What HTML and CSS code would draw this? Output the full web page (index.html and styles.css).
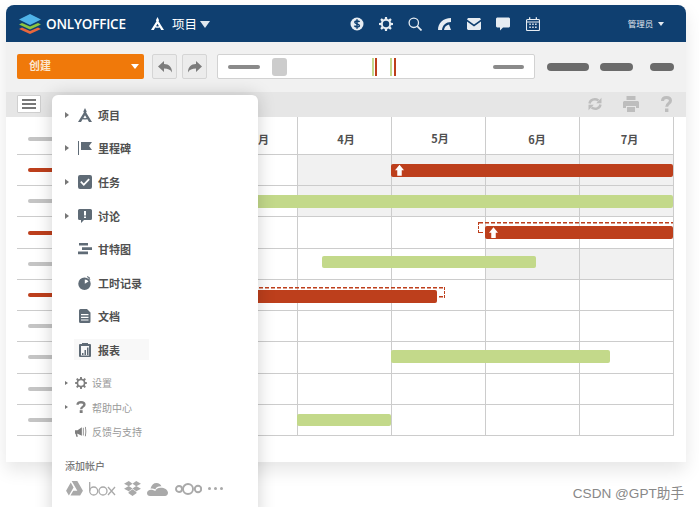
FILE: index.html
```html
<!DOCTYPE html>
<html lang="en">
<head>
    <meta charset="UTF-8">
    <meta name="viewport" content="width=device-width, initial-scale=1.0">
    <title>ONLYOFFICE 项目</title>
    <link rel="stylesheet" href="styles.css">
</head>
<body>
<div class="page">
    <div class="window">
        <header class="topbar">
            <svg class="logo" viewBox="0 0 22 20">
                <path fill="#e8673c" d="M11 20 0 15l3-1.5L11 17l8-3.500 3 1.500z"/>
                <path fill="#8cc63f" d="M11 15.500 0 10.500 3 9l8 3.500L19 9l3 1.500z"/>
                <path fill="#4fb3e8" d="M11 11 0 5.500 11 0l11 5.500z"/>
            </svg>
            <span class="brand">ONLYOFFICE</span>
            <svg class="module-icon" viewBox="0 0 14 14"><path fill="#fff" d="M7 0l1.700 3.400-.6 1.100L14 14h-3L7 7.200 3 14H0l5.900-9.500-.6-1.100zM4.500 11l.6-1.300c1.100.6 2.700.6 3.800 0l.6 1.300c-1.500.8-3.500.8-5 0z"/></svg>
            <span class="module-name">项目</span>
            <span class="caret-big"></span>
            <nav class="top-icons">
                <svg viewBox="0 0 14 14"><circle cx="7" cy="7" r="6.500" fill="#e6ecf2"/><path fill="none" stroke="#0f3f70" stroke-width="1.500" d="M9.500 5C9 3.800 4.800 3.600 4.800 5.300c0 2 4.600 1.200 4.600 3.400 0 1.700-4.300 1.500-5-.1M7 2.300v9.400"/></svg>
                <svg viewBox="0 0 14 14"><path fill="#e6ecf2" d="M6 0h2l.3 2 1.300.5L11.300 1.300l1.400 1.400L11.500 4.400 12 5.700l2 .3v2l-2 .3-.5 1.300 1.200 1.700-1.400 1.400-1.700-1.200-1.300.5L8 14H6l-.3-2-1.300-.5-1.700 1.200-1.400-1.400 1.200-1.700L2 8.300 0 8V6l2-.3.500-1.300L1.300 2.700l1.400-1.400 1.700 1.200L5.700 2z"/><circle cx="7" cy="7" r="3.200" fill="#0f3f70"/></svg>
                <svg viewBox="0 0 14 14"><circle cx="5.800" cy="5.800" r="4.700" fill="none" stroke="#e6ecf2" stroke-width="1.300"/><path stroke="#e6ecf2" stroke-width="1.700" d="M9.200 9.200 13.500 13.500"/></svg>
                <svg viewBox="0 0 14 14"><path fill="#e6ecf2" d="M0 13C0 6 5 1 13 1v4C8 5 4.500 8 4 13zM6 13c.3-3 2.500-5 5-5.500L13 13z"/></svg>
                <svg viewBox="0 0 14 12"><path fill="#e6ecf2" d="M0 1.500 1 0h12l1 1.500L7 6.500zM0 3.500l7 5 7-5V11l-1 1H1l-1-1z"/></svg>
                <svg viewBox="0 0 14 13"><path fill="#e6ecf2" d="M1 0h12l1 1v8l-1 1H7l-3 3v-3H1L0 9V1z"/></svg>
                <svg viewBox="0 0 14 14"><path fill="none" stroke="#e6ecf2" stroke-width="1.100" d="M1.500 2.500h11a1 1 0 0 1 1 1v9a1 1 0 0 1-1 1h-11a1 1 0 0 1-1-1v-9a1 1 0 0 1 1-1zM.5 5h13"/><path fill="#e6ecf2" d="M3 .3h1.300v2.700H3zM9.700.3H11v2.700H9.700zM3.300 6.500h1.500V8H3.300zM6.200 6.500h1.500V8H6.200zM9.100 6.500h1.500V8H9.100zM3.300 9.400h1.500v1.500H3.300zM6.200 9.400h1.500v1.500H6.200zM9.100 9.400h1.500v1.500H9.100z"/></svg>
            </nav>
            <span class="user">管理员</span>
            <span class="caret-small"></span>
        </header>

        <div class="toolbar">
            <button class="create"><span>创建</span><i class="caret-white"></i></button>
            <button class="step">
                <svg viewBox="0 0 14 12"><path fill="#7c7c7c" d="M6 0v3c5 0 8 3 8 8.500C12.500 8.500 10 7.500 6 7.500V11L0 5.500z"/></svg>
            </button>
            <button class="step">
                <svg viewBox="0 0 14 12"><path fill="#7c7c7c" d="M8 0v3c-5 0-8 3-8 8.500C1.500 8.500 4 7.500 8 7.500V11l6-5.500z"/></svg>
            </button>
            <div class="timeline">
                <span class="tl-line"></span>
                <span class="tl-thumb"></span>
                <span class="tl-mark first"><i class="g"></i><i class="r"></i></span>
                <span class="tl-mark second"><i class="g"></i><i class="r"></i></span>
                <span class="tl-line end"></span>
            </div>
            <div class="pills">
                <span class="pill p1"></span>
                <span class="pill p2"></span>
                <span class="pill p3"></span>
            </div>
        </div>

        <div class="subbar">
            <button class="burger"><i></i><i></i><i></i></button>
            <div class="sub-icons">
                <svg class="ic-refresh" viewBox="0 0 14 14"><path fill="none" stroke="#bdbdbd" stroke-width="2.400" d="M1.500 6.500C2 3 6.500.8 10.500 3.500M12.500 7.500c-.5 3.500-5 5.700-9 3"/><path fill="#bdbdbd" d="M13.500.8v5.400H8.200zM.5 13.200V7.800h5.300z"/></svg>
                <svg class="ic-print" viewBox="0 0 16 16"><path fill="#bdbdbd" d="M3.500 0h9v4h-9zM1 5h14l1 1v6h-3v-2H3v2H0V6zM4 11h8v5H4z"/></svg>
                <svg class="ic-help" viewBox="0 0 11 16"><path fill="none" stroke="#bdbdbd" stroke-width="3" d="M1.500 5C1.500 2.500 3.300 1.500 5.500 1.500s4 1.200 4 3.200c0 2.600-3.800 2.700-3.800 6"/><path fill="#bdbdbd" d="M4 12.500h3.400V16H4z"/></svg>
            </div>
        </div>

        <section class="gantt">
            <div class="g-row g-head">
                <div class="task"><i class="stub grey"></i></div>
                <div class="cell month m4">4月</div>
                <div class="cell month m5">5月</div>
                <div class="cell month m6">6月</div>
                <div class="cell month m7">7月</div>
                <span class="old-month">月</span>
            </div>
            <div class="g-row">
                <div class="task"><i class="stub red"></i></div>
                <div class="cell shade"></div><div class="cell shade"></div><div class="cell shade"></div><div class="cell shade"></div>
                <div class="bar red b1"><i class="up"></i></div>
            </div>
            <div class="g-row">
                <div class="task"><i class="stub grey"></i></div>
                <div class="cell shade"></div><div class="cell shade"></div><div class="cell shade"></div><div class="cell shade"></div>
                <div class="bar green b2"></div>
            </div>
            <div class="g-row">
                <div class="task"><i class="stub red"></i></div>
                <div class="cell"></div><div class="cell"></div><div class="cell"></div><div class="cell"></div>
                <div class="plan p-a"></div>
                <div class="bar red b3"><i class="up"></i></div>
            </div>
            <div class="g-row">
                <div class="task"><i class="stub grey"></i></div>
                <div class="cell"></div><div class="cell"></div><div class="cell shade"></div><div class="cell shade"></div>
                <div class="bar green b4"></div>
            </div>
            <div class="g-row">
                <div class="task"><i class="stub red"></i></div>
                <div class="cell"></div><div class="cell"></div><div class="cell"></div><div class="cell"></div>
                <div class="plan p-b"></div>
                <div class="bar red b5"></div>
            </div>
            <div class="g-row">
                <div class="task"><i class="stub grey"></i></div>
                <div class="cell"></div><div class="cell"></div><div class="cell"></div><div class="cell"></div>
            </div>
            <div class="g-row">
                <div class="task"><i class="stub grey"></i></div>
                <div class="cell"></div><div class="cell"></div><div class="cell"></div><div class="cell"></div>
                <div class="bar green b7"></div>
            </div>
            <div class="g-row">
                <div class="task"><i class="stub grey"></i></div>
                <div class="cell"></div><div class="cell"></div><div class="cell"></div><div class="cell"></div>
            </div>
            <div class="g-row">
                <div class="task"><i class="stub grey"></i></div>
                <div class="cell"></div><div class="cell"></div><div class="cell"></div><div class="cell"></div>
                <div class="bar green b9"></div>
            </div>
        </section>
    </div>

    <aside class="menu">
        <a class="item"><i class="tri"></i><span class="main">
            <svg viewBox="0 0 14 14"><path d="M7 0l1.700 3.400-.6 1.100L14 14h-3L7 7.200 3 14H0l5.900-9.500-.6-1.100zM4.500 11l.6-1.300c1.100.6 2.700.6 3.800 0l.6 1.300c-1.500.8-3.500.8-5 0z"/></svg>项目</span></a>
        <a class="item"><i class="tri"></i><span class="main">
            <svg viewBox="0 0 14 14"><path d="M0 0h1v14H0zM3 1h11l-3 4 3 4H3z"/></svg>里程碑</span></a>
        <a class="item"><i class="tri"></i><span class="main">
            <svg viewBox="0 0 14 14"><path fill-rule="evenodd" d="M2 0h10a2 2 0 0 1 2 2v10a2 2 0 0 1-2 2H2a2 2 0 0 1-2-2V2a2 2 0 0 1 2-2zm1.400 6L2.200 7.300l3.600 3.800 6-6.300-1.300-1.300-4.700 5z"/></svg>任务</span></a>
        <a class="item"><i class="tri"></i><span class="main">
            <svg viewBox="0 0 14 14"><path fill-rule="evenodd" d="M1.500 0h11A1.500 1.500 0 0 1 14 1.500v8a1.500 1.500 0 0 1-1.500 1.500H6l-3 3v-3H1.500A1.500 1.500 0 0 1 0 9.500v-8A1.500 1.500 0 0 1 1.500 0zM6 2v4.500h2V2zm0 5.500V9h2V7.500z"/></svg>讨论</span></a>
        <a class="item"><i class="tri hidden"></i><span class="main">
            <svg viewBox="0 0 14 14"><path d="M1 1h9v2.600H1zM4 5.300h10v2.600H4zM0 9.600h10v2.600H0z"/></svg>甘特图</span></a>
        <a class="item"><i class="tri hidden"></i><span class="main">
            <svg viewBox="0 0 14 14"><path fill-rule="evenodd" d="M6.500 1.500a6.250 6.250 0 1 1 0 12.500 6.250 6.250 0 0 1 0-12.500zm.3 2v4.300l3.700-2.400C9.700 4.300 8.400 3.500 6.800 3.500z"/><path d="M9.500 0l2.600 1.700-.6.900-2.600-1.700zM10.800 1.400l1.700 2-.8.600-1.600-2z"/></svg>工时记录</span></a>
        <a class="item"><i class="tri hidden"></i><span class="main">
            <svg viewBox="0 0 14 14"><path fill-rule="evenodd" d="M2.500 0H9l3.500 3.500v9A1.500 1.500 0 0 1 11 14H2.500A1.500 1.500 0 0 1 1 12.500v-11A1.500 1.500 0 0 1 2.500 0zM3 5v1.200h7.500V5zm0 2.700v1.200h7.500V7.700zm0 2.700v1.200h7.500v-1.200z"/></svg>文档</span></a>
        <a class="item"><i class="tri hidden"></i><span class="main active">
            <svg viewBox="0 0 14 14"><path fill-rule="evenodd" d="M2 1h2V0h6v1h2a1 1 0 0 1 1 1v11a1 1 0 0 1-1 1H2a1 1 0 0 1-1-1V2a1 1 0 0 1 1-1zm1 2v9.500h8V3zm1 7h1.500v2H4zm2.500-3H8v5H6.500zM9 4.500h1.500V12H9z"/></svg>报表</span></a>

        <a class="sub first"><i class="tri small"></i>
            <svg viewBox="0 0 14 14"><path fill="#7e7e7e" fill-rule="evenodd" d="M6 0h2l.3 2 1.300.5L11.300 1.300l1.400 1.400L11.500 4.400 12 5.700l2 .3v2l-2 .3-.5 1.300 1.200 1.700-1.400 1.400-1.700-1.200-1.300.5L8 14H6l-.3-2-1.300-.5-1.700 1.200-1.400-1.400 1.200-1.700L2 8.300 0 8V6l2-.3.500-1.300L1.300 2.700l1.400-1.400 1.700 1.200L5.700 2zM7 3.800a3.200 3.200 0 1 0 0 6.400 3.200 3.200 0 0 0 0-6.400z"/></svg>设置</a>
        <a class="sub"><i class="tri small"></i>
            <svg viewBox="0 0 11 14"><path fill="none" stroke="#7e7e7e" stroke-width="2.800" d="M1.500 4.500C1.500 2.300 3.300 1.400 5.500 1.400s4 1 4 2.900c0 2.300-3.800 2.300-3.800 5.200"/><path fill="#7e7e7e" d="M4 10.700h3.400V14H4z"/></svg>帮助中心</a>
        <a class="sub"><i class="tri small hidden"></i>
            <svg class="wide" viewBox="0 0 14 14"><path fill="#7e7e7e" d="M0 5h3l5-3.500v10L3 9H2.500l.8 3.500H1.500L.7 9H0zM9.200 2h.9v9h-.9zM11.500 1l1 .1c.9 3.500.9 7 0 10.800l-1 .1c.9-3.800.9-7.400 0-11z"/></svg>反馈与支持</a>

        <h4 class="add-title">添加帐户</h4>
        <div class="accounts">
            <svg class="a-drive" viewBox="0 0 18 16"><path d="M6 0h6l6 10.500h-6zM5 1.500 8 7 3 15.500 0 10.500zM4.700 15.500l3-5H18l-3 5z"/></svg>
            <svg class="a-box" viewBox="0 0 27 14"><path fill="none" stroke="#a9a9a9" stroke-width="1.300" d="M.7 0v9"/><circle cx="4.700" cy="9" r="4" fill="none" stroke="#a9a9a9" stroke-width="1.300"/><circle cx="14" cy="9" r="4" fill="none" stroke="#a9a9a9" stroke-width="1.300"/><path fill="none" stroke="#a9a9a9" stroke-width="1.300" d="M19 5l7 8M26 5l-7 8"/></svg>
            <svg class="a-drop" viewBox="0 0 18 16"><path d="M5 0l4 2.800L5 5.600 0 3zM13 0l5 3-5 2.600-4-2.800zM0 8.200l5-3 4 2.800-4 2.900zM18 8.200l-5-3-4 2.800 4 2.900zM4.800 11.800l4.200-2.900 4.200 2.900v1.300L9 16l-4.200-2.900z"/></svg>
            <svg class="a-cloud" viewBox="0 0 21 14"><path d="M3.500 6.500C4.500 3 6.500 1 9.500 1c2.400 0 4.300 1.400 5 3.400-3.200-.4-5.300 1-6.200 3-1-.5-3.200-1-4.800-.9zM0 11c0-2.400 3-4 5.800-3 1 .4 2 .8 2.500 1.100.9-2.300 3-3.400 5.500-3.300 3-.1 7.200 1.800 7.200 5 0 1.700-1.200 3.200-3 3.200H3c-1.800 0-3-1.300-3-3z"/></svg>
            <svg class="a-own" viewBox="0 0 27 14"><g fill="none" stroke="#a9a9a9" stroke-width="1.900"><circle cx="4" cy="7" r="3"/><circle cx="13" cy="7" r="5"/><circle cx="23" cy="7" r="3.200"/></g></svg>
            <svg class="a-more" viewBox="0 0 15 3"><circle cx="1.500" cy="1.500" r="1.500"/><circle cx="7.500" cy="1.500" r="1.500"/><circle cx="13.500" cy="1.500" r="1.500"/></svg>
        </div>
    </aside>

    <div class="watermark">CSDN @GPT助手</div>
</div>
</body>
</html>
```

FILE: styles.css
```css
* {
    box-sizing: border-box;
}

body {
    margin: 0;
    background-color: #fff;
    font-family: "Noto Sans CJK SC", "Noto Sans", sans-serif;
}

.page {
    position: relative;
    width: 699px;
    height: 507px;
    overflow: hidden;
    padding: 5px 0 0 6px;
}

.window {
    width: 680px;
    height: 457px;
    background-color: #fff;
    border-radius: 8px 8px 0 0;
    box-shadow: 0 8px 18px rgba(0, 0, 0, 0.1);
}

/* top navigation */
.topbar {
    display: flex;
    align-items: center;
    height: 37px;
    padding-left: 13px;
    background-color: #0f3f70;
    border-radius: 8px 8px 0 0;
    color: #fff;
}

.logo {
    width: 22px;
    height: 20px;
}

.brand {
    margin-left: 5px;
    width: 81px;
    font-family: "Open Sans", sans-serif;
    font-size: 13.5px;
    font-weight: 600;
    letter-spacing: -0.2px;
}

.module-icon {
    width: 13px;
    height: 13px;
    margin-left: 24px;
}

.module-name {
    margin-left: 8px;
    font-size: 12.5px;
}

.caret-big {
    margin: 2px 0 0 3px;
    border-left: 5.5px solid transparent;
    border-right: 5.5px solid transparent;
    border-top: 7px solid #dfe7ee;
}

.top-icons {
    display: flex;
    align-items: center;
    gap: 15.4px;
    margin-left: 139.5px;
}

.top-icons svg {
    width: 14px;
    height: 14px;
}

.user {
    margin: -2px 0 0 88px;
    font-size: 8.5px;
    color: #e3e9ef;
}

.caret-small {
    margin-left: 5px;
    border-left: 3px solid transparent;
    border-right: 3px solid transparent;
    border-top: 4px solid #e3e9ef;
}

/* create button, history and timeline */
.toolbar {
    display: flex;
    align-items: center;
    height: 50px;
    padding: 0 0 1px 11px;
    background-color: #f1f1f1;
}

button {
    padding: 0;
    border: none;
    font-family: inherit;
}

.create {
    display: flex;
    align-items: center;
    justify-content: space-between;
    width: 127px;
    height: 25px;
    padding: 0 5px 0 12px;
    background-color: #f0790a;
    border-radius: 2px;
    color: #fbe6cf;
    font-size: 11px;
    font-weight: 700;
    line-height: 23px;
}

.create span {
    margin-top: -2px;
}

.caret-white {
    border-left: 4.5px solid transparent;
    border-right: 4.5px solid transparent;
    border-top: 5px solid #fff;
}

.step {
    display: flex;
    align-items: center;
    justify-content: center;
    width: 25px;
    height: 25px;
    margin-left: 5px;
    background-color: #ececec;
    border: 1px solid #d5d5d5;
    border-radius: 2px;
}

.create + .step {
    margin-left: 8px;
}

.step svg {
    width: 14px;
    height: 12px;
}

.timeline {
    position: relative;
    display: flex;
    align-items: center;
    width: 318px;
    height: 25px;
    margin-left: 10px;
    padding-left: 10px;
    background-color: #fff;
    border: 1px solid #d2d2d2;
    border-radius: 2px;
}

.tl-line {
    width: 32px;
    height: 4px;
    background-color: #8a8a8a;
    border-radius: 2px;
}

.tl-line.end {
    width: 31px;
    margin-left: 97px;
}

.tl-thumb {
    width: 15px;
    height: 18px;
    margin-left: 12px;
    background-color: #cccccc;
    border-radius: 3px;
}

.tl-mark {
    display: flex;
    gap: 1px;
    height: 18px;
}

.tl-mark.first {
    margin-left: 85px;
}

.tl-mark.second {
    gap: 2px;
    margin-left: 13px;
}

.tl-mark i {
    display: block;
    height: 100%;
}

.tl-mark .g {
    width: 2px;
    background-color: #c4d88c;
}

.tl-mark .r {
    width: 2px;
    background-color: #bd3f1c;
}

.pills {
    display: flex;
    gap: 11px;
    margin-left: 12px;
}

.pill {
    height: 8px;
    background-color: #6b6b6b;
    border-radius: 4px;
}

.p1 {
    width: 42px;
}

.p2 {
    width: 33px;
}

.p3 {
    width: 24px;
    margin-left: 6px;
}

/* second toolbar */
.subbar {
    display: flex;
    align-items: flex-start;
    justify-content: space-between;
    height: 25px;
    padding: 3px 14px 0 11px;
    background-color: #e6e6e6;
}

.burger {
    display: flex;
    flex-direction: column;
    align-items: center;
    justify-content: center;
    gap: 1.5px;
    width: 24px;
    height: 18px;
    background-color: #fff;
    border: 1px solid #cfcfcf;
    border-radius: 1px;
}

.burger i {
    width: 14px;
    height: 2.5px;
    background-color: #777;
}

.sub-icons {
    display: flex;
    align-items: center;
    gap: 20px;
    height: 17px;
}

.ic-refresh {
    width: 14px;
    height: 14px;
}

.ic-print {
    width: 16px;
    height: 16px;
    margin-left: 1px;
}

.ic-help {
    width: 11px;
    height: 16px;
    margin-left: 2px;
}

/* chart */
.gantt {
    padding-left: 11px;
}

.g-row {
    position: relative;
    display: grid;
    grid-template-columns: 280px 94px 94px 94px 95px;
    width: 657px;
    height: 31.22px;
    border-bottom: 1px solid #cccccc;
}

.g-head {
    height: 38px;
}

.task {
    display: flex;
    align-items: center;
    padding-left: 11px;
}

.g-head .task {
    align-items: flex-end;
    padding-bottom: 13px;
}

.stub {
    width: 40px;
    height: 4px;
    border-radius: 2px;
}

.stub.grey {
    background-color: #c4c4c4;
}

.stub.red {
    background-color: #bd3f1c;
}

.cell {
    border-left: 1px solid #cccccc;
}

.cell:nth-child(5) {
    border-right: 1px solid #cccccc;
}

.shade {
    background-color: #f1f1f1;
}

.month {
    display: flex;
    align-items: center;
    justify-content: center;
    padding-top: 7px;
    font-size: 11px;
    font-weight: 700;
    color: #505050;
}

.m4 {
    padding-left: 3px;
}

.m5 {
    padding-top: 4px;
    padding-left: 3px;
}

.m6 {
    padding-left: 9px;
}

.m7 {
    padding-left: 6px;
}

.old-month {
    position: absolute;
    left: 241px;
    top: 14px;
    font-size: 11px;
    font-weight: 700;
    color: #505050;
}

.bar {
    position: absolute;
    display: flex;
    align-items: center;
    height: 12.5px;
    border-radius: 2px;
}

.bar.red {
    background-color: #bd3f1c;
}

.bar.green {
    background-color: #c3d98a;
}

.up {
    position: relative;
    width: 9px;
    height: 11px;
    margin-left: 4px;
    background-color: #fff;
    clip-path: polygon(50% 0, 100% 50%, 75% 50%, 75% 100%, 25% 100%, 25% 50%, 0 50%);
}

.plan {
    position: absolute;
    height: 11px;
    background: repeating-linear-gradient(90deg, #bd3f1c 0 4px, transparent 4px 6px) top / 100% 1.5px no-repeat,
        repeating-linear-gradient(90deg, #bd3f1c 0 4px, transparent 4px 6px) bottom / 100% 1.5px no-repeat;
}

.b1 { left: 374px; width: 282px; top: 9px; }
.b2 { left: 230px; width: 426px; top: 9px; }
.b3 { left: 468px; width: 188px; top: 9px; }
.b4 { left: 305px; width: 214px; top: 7px; }
.b5 { left: 230px; width: 190px; top: 10.500px; }
.b7 { left: 374px; width: 219px; top: 8px; }
.b9 { left: 280px; width: 94px; top: 9px; }

.p-a {
    left: 461px;
    width: 195px;
    top: 5px;
    border-left: 1px dashed #bd3f1c;
}

.p-b {
    left: 230px;
    width: 198px;
    top: 7px;
    border-right: 1px dashed #bd3f1c;
}

/* side menu, floats over the chart */
.menu {
    position: absolute;
    left: 52px;
    top: 95px;
    width: 206px;
    height: 430px;
    padding: 3px 0 0 13px;
    background-color: #fff;
    border-radius: 6px 6px 0 0;
    box-shadow: 0 0 18px rgba(0, 0, 0, 0.18);
}

.item {
    display: flex;
    align-items: center;
    height: 33.6px;
}

.tri {
    width: 0;
    height: 0;
    border-left: 4px solid #777;
    border-top: 3px solid transparent;
    border-bottom: 3px solid transparent;
}

.tri.small {
    border-left-width: 3px;
    border-top-width: 2px;
    border-bottom-width: 2px;
}

.tri.hidden {
    visibility: hidden;
}

.main {
    display: flex;
    align-items: center;
    gap: 6px;
    width: 75px;
    height: 21px;
    margin-left: 5px;
    padding-left: 4px;
    font-size: 11px;
    font-weight: 700;
    color: #505050;
}

.main svg {
    flex: none;
    width: 14px;
    height: 14px;
    fill: #5f6b76;
}

.main.active {
    background-color: #f8f8f8;
}

.sub {
    display: flex;
    align-items: center;
    height: 24.500px;
    font-size: 10px;
    color: #999;
}

.sub.first {
    margin-top: 3.500px;
}

.sub svg {
    flex: none;
    width: 12px;
    height: 12px;
    margin: 0 5px 0 7px;
}

.add-title {
    margin: 15px 0 0;
    height: 14px;
    line-height: 14px;
    font-size: 10px;
    font-weight: 500;
    color: #777;
}

.accounts {
    display: flex;
    align-items: center;
    margin: 7px 0 0 1px;
    height: 18px;
}

.accounts svg {
    fill: #a9a9a9;
}

.a-drive { width: 17px; height: 15px; }
.a-box { width: 27px; height: 14px; margin-left: 6px; }
.a-drop { width: 17px; height: 15px; margin-left: 8px; }
.a-cloud { width: 21px; height: 14px; margin-left: 6px; }
.a-own { width: 27px; height: 14px; margin-left: 7px; }
.a-more { width: 15px; height: 3px; margin-left: 6px; }

.watermark {
    position: absolute;
    right: 15px;
    top: 482px;
    font-family: "Liberation Sans", "Noto Sans CJK SC", sans-serif;
    font-size: 13.6px;
    color: #888;
}
```
